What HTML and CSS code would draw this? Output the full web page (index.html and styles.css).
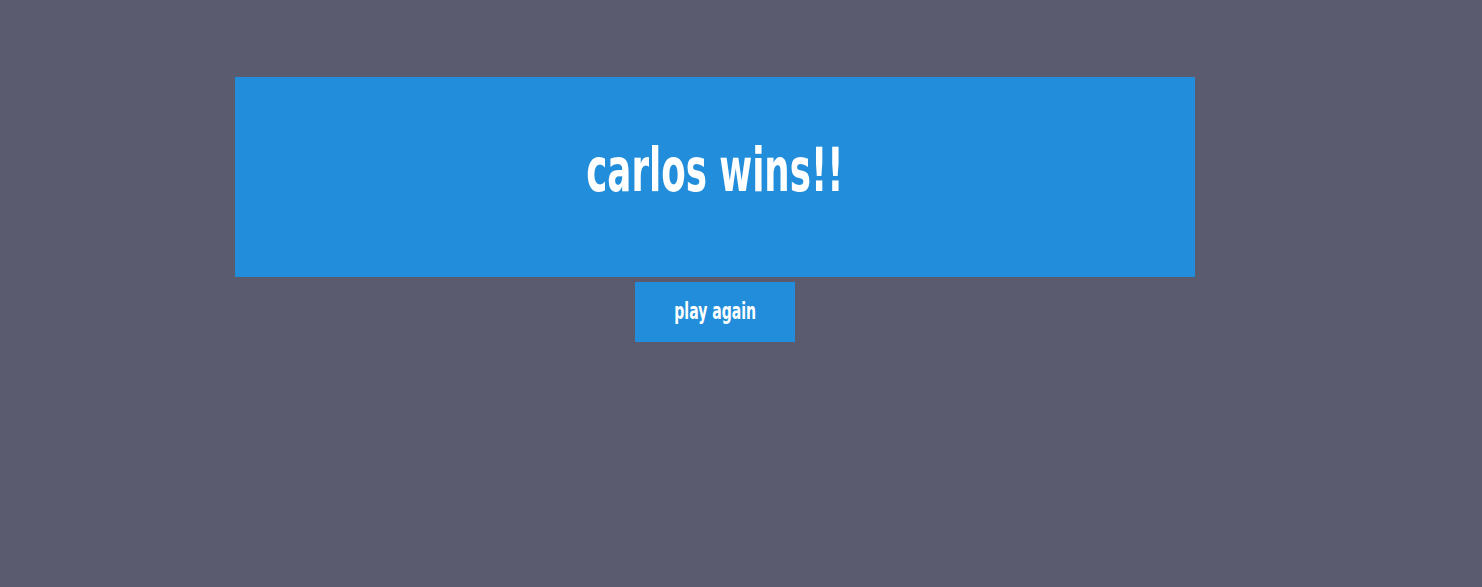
FILE: index.html
```html
<!DOCTYPE html>
<html>
<head>
<meta charset="utf-8">
<link rel="stylesheet" href="styles.css">
</head>
<body>
<main class="game">
  <section class="banner">
    <h1 class="winner">carlos wins!!</h1>
  </section>
  <button class="again"><span class="again-label">play again</span></button>
</main>
</body>
</html>
```
FILE: styles.css
```css
html, body {
  margin: 0;
  padding: 0;
  background: #5b5b70;
  height: 100%;
}
.game {
  width: 960px;
  margin-left: 235px;
  padding-top: 77px;
  display: flex;
  flex-direction: column;
  align-items: center;
  gap: 5px;
}
.banner {
  width: 960px;
  height: 200px;
  background: #228edb;
  display: flex;
  align-items: center;
  justify-content: center;
}
.winner {
  margin: 0;
  color: #fff;
  font-family: "DejaVu Sans", sans-serif;
  font-stretch: condensed;
  font-weight: bold;
  font-size: 60px;
  line-height: 1;
  transform: scaleX(0.66);
  position: relative;
  top: -7px;
  white-space: nowrap;
}
.again {
  width: 160px;
  height: 60px;
  border: 0;
  background: #228edb;
  color: #fff;
  font-family: "DejaVu Sans", sans-serif;
  font-stretch: condensed;
  font-weight: bold;
  font-size: 23px;
  padding: 0;
  display: flex;
  align-items: center;
  justify-content: center;
}
.again-label {
  display: inline-block;
  transform: scaleX(0.68);
  white-space: nowrap;
  position: relative;
  top: -1px;
}
```
